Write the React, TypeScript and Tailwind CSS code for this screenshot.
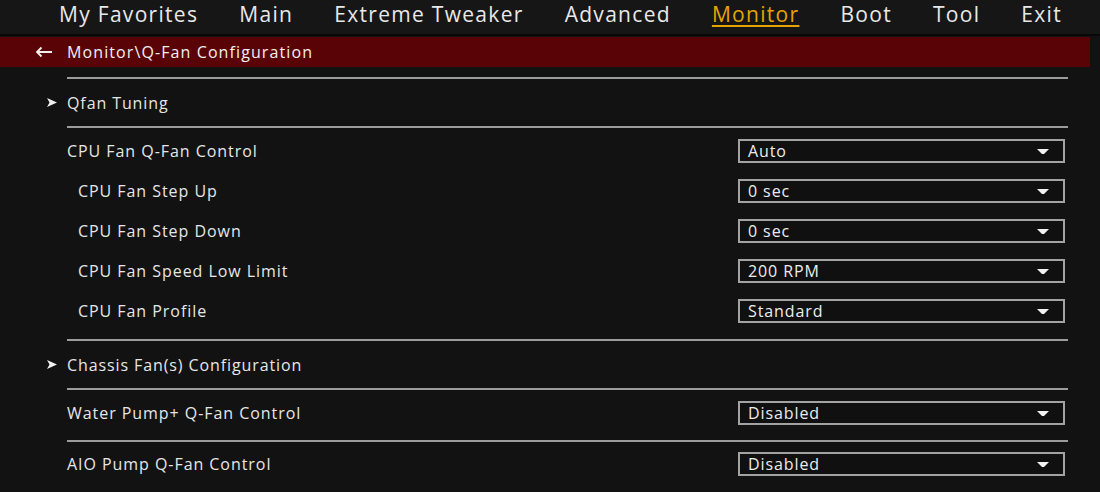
import React from "react";

const navItems = ["My Favorites", "Main", "Extreme Tweaker", "Advanced", "Monitor", "Boot", "Tool", "Exit"];

function Caret() {
    return (
        <svg width="12" height="5" viewBox="0 0 12 5" className="shrink-0">
            <path d="M0 0 H12 L7 5 H5 Z" fill="#f2f2f2" />
        </svg>
    );
}

function Select({ value }: { value: string }) {
    return (
        <div className="w-[327px] h-[24px] border-2 border-[#a3a3a3] bg-[#101010] flex items-center justify-between pl-[8px] pr-[14px] mr-[3px]">
            <span className="text-[16px] font-medium text-[#ececec] tracking-[0.9px]">{value}</span>
            <Caret />
        </div>
    );
}

function Row({ label, value, sub }: { label: string; value: string; sub?: boolean }) {
    return (
        <div className="h-[40px] flex items-center justify-between">
            <span className={`text-[16px] font-medium text-[#e6e6e6] tracking-[0.95px] ${sub ? "pl-[11px]" : ""}`}>{label}</span>
            <Select value={value} />
        </div>
    );
}

function Link({ label }: { label: string }) {
    return (
        <div className="h-[47px] flex items-center relative">
            <svg width="10" height="9" viewBox="0 0 10 9" className="absolute left-[-20px] top-[19px]">
                <path d="M0 0 L10 4.5 L0 9 L2.5 4.5 Z" fill="#f0f0f0" />
            </svg>
            <span className="text-[16px] font-medium text-[#e6e6e6] tracking-[0.9px]">{label}</span>
        </div>
    );
}

function Divider() {
    return <div className="h-[2px] bg-[#9c9c9c]" />;
}

export default function App() {
    return (
        <div className="w-[1100px] h-[492px] bg-[#121212] overflow-hidden" style={{ fontFamily: '"Open Sans", "Noto Sans", sans-serif' }}>
            {/* Top Menu */}
            <div className="h-[36px] bg-[#161616] flex items-start pl-[59px] gap-[41px] border-b-2 border-[#080808]">
                {navItems.map((item) => (
                    <span
                        key={item}
                        className={`text-[21px] font-medium leading-[28px] tracking-[1.3px] ${item === "Monitor" ? "text-[#e6a400] underline decoration-2 underline-offset-[3px]" : "text-[#e8e8e8]"}`}
                    >
                        {item}
                    </span>
                ))}
            </div>

            {/* Breadcrumb */}
            <div className="mt-[1px] h-[30px] w-[1090px] bg-[#5a0306] flex items-center pl-[35px] gap-[14px]">
                <svg width="18" height="12" viewBox="0 0 18 12">
                    <path d="M17 6 H2 M6.5 1.5 L2 6 L6.5 10.5" stroke="#f0f0f0" strokeWidth="1.8" fill="none" />
                </svg>
                <span className="text-[16px] font-medium text-[#f0f0f0] tracking-[1.1px]">Monitor\Q-Fan Configuration</span>
            </div>

            {/* Settings */}
            <div className="ml-[67px] w-[1001px] mt-[10px] flex flex-col">
                <Divider />
                <Link label="Qfan Tuning" />
                <Divider />
                <div className="pt-[3px] pb-[8px]">
                    <Row label="CPU Fan Q-Fan Control" value="Auto" />
                    <Row label="CPU Fan Step Up" value="0 sec" sub />
                    <Row label="CPU Fan Step Down" value="0 sec" sub />
                    <Row label="CPU Fan Speed Low Limit" value="200 RPM" sub />
                    <Row label="CPU Fan Profile" value="Standard" sub />
                </div>
                <Divider />
                <Link label="Chassis Fan(s) Configuration" />
                <Divider />
                <div className="pt-[3px] pb-[7px]">
                    <Row label="Water Pump+ Q-Fan Control" value="Disabled" />
                </div>
                <Divider />
                <div className="pt-[2px]">
                    <Row label="AIO Pump Q-Fan Control" value="Disabled" />
                </div>
            </div>
        </div>
    );
}
